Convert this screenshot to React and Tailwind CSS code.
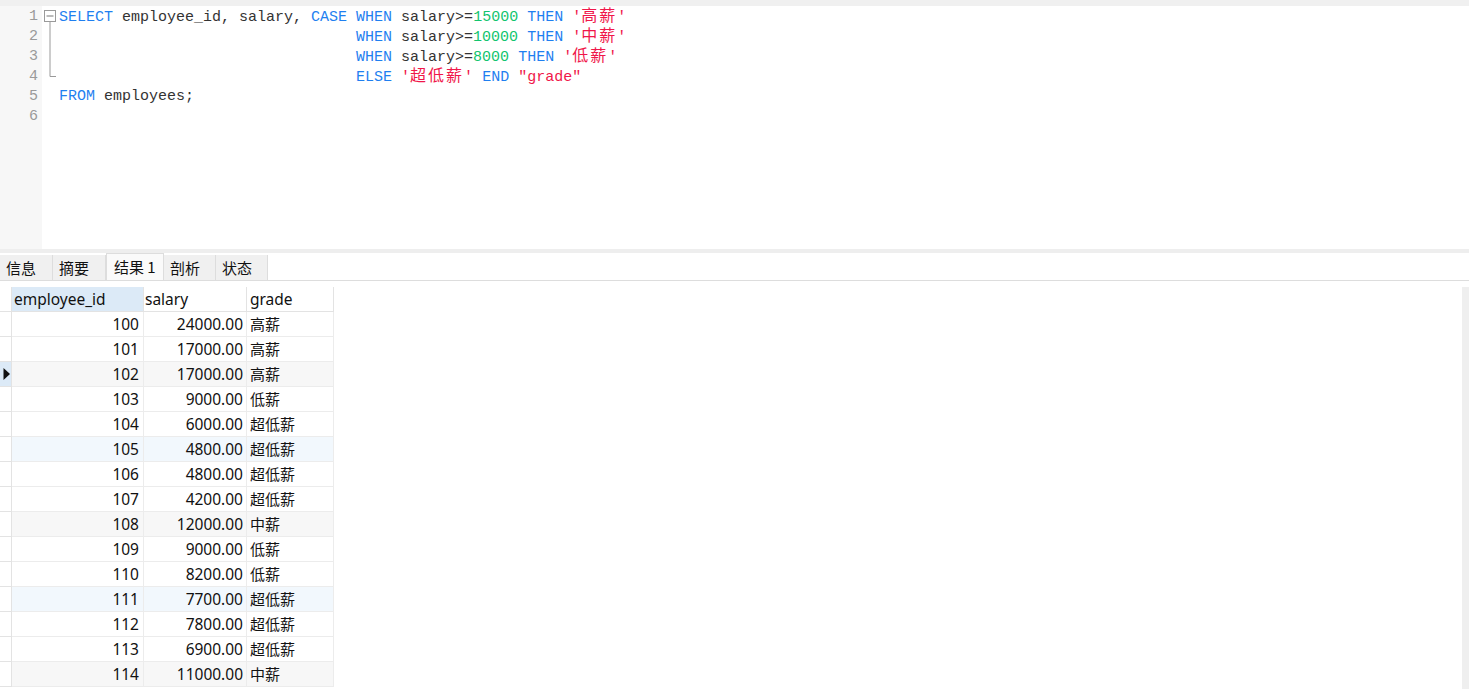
import React from "react";

const B = "text-[#1f7ff0]";
const G = "text-[#12c46e]";
const R = "text-[#f0174a]";
const T = "text-[#333333]";

function Cjk({ children, cls }) {
  return <span className={`text-[16px] tracking-[2px] ${cls}`}>{children}</span>;
}

const lines = [
  [
    ["SELECT", B], [" employee_id, salary, ", T], ["CASE", B], [" ", T], ["WHEN", B], [" salary>=", T], ["15000", G], [" ", T], ["THEN", B], [" '", R], ["高薪", R, true], ["'", R],
  ],
  [
    ["                                 ", T], ["WHEN", B], [" salary>=", T], ["10000", G], [" ", T], ["THEN", B], [" '", R], ["中薪", R, true], ["'", R],
  ],
  [
    ["                                 ", T], ["WHEN", B], [" salary>=", T], ["8000", G], [" ", T], ["THEN", B], [" '", R], ["低薪", R, true], ["'", R],
  ],
  [
    ["                                 ", T], ["ELSE", B], [" '", R], ["超低薪", R, true], ["'", R], [" ", T], ["END", B], [" ", T], ['"grade"', R],
  ],
  [["FROM", B], [" employees;", T]],
  [],
];

const rows = [
  ["100", "24000.00", "高薪"],
  ["101", "17000.00", "高薪"],
  ["102", "17000.00", "高薪"],
  ["103", "9000.00", "低薪"],
  ["104", "6000.00", "超低薪"],
  ["105", "4800.00", "超低薪"],
  ["106", "4800.00", "超低薪"],
  ["107", "4200.00", "超低薪"],
  ["108", "12000.00", "中薪"],
  ["109", "9000.00", "低薪"],
  ["110", "8200.00", "低薪"],
  ["111", "7700.00", "超低薪"],
  ["112", "7800.00", "超低薪"],
  ["113", "6900.00", "超低薪"],
  ["114", "11000.00", "中薪"],
];

function rowBg(i) {
  if (i % 3 !== 2) return "bg-white";
  return (i / 3) % 2 < 1 ? "bg-[#f7f7f7]" : "bg-[#f2f8fd]";
}

const tabs = ["信息", "摘要", "结果 1", "剖析", "状态"];
const tabW = ["w-[53px]", "w-[53px]", "w-[58px]", "w-[52px]", "w-[52px]"];

export default function App() {
  return (
    <div className="w-[1469px] h-[689px] overflow-hidden bg-white flex flex-col">
      <div className="h-[6px] shrink-0 bg-[#f0f0f0]" />
      {/* Editor */}
      <div className="h-[243px] shrink-0 flex font-['Liberation_Mono','Noto_Sans_CJK_SC',monospace] text-[15px]">
        <div className="w-[42px] bg-[#f7f7f7] pt-[1px] pr-[4px] flex flex-col items-end text-[#9a9a9a]">
          {[1, 2, 3, 4, 5, 6].map((n) => (
            <div key={n} className="h-[20px] leading-[20px]">{n}</div>
          ))}
        </div>
        <div className="w-[17px] shrink-0">
          <svg width="17" height="90" viewBox="0 0 17 90">
            <rect x="2.5" y="4.5" width="11" height="11" fill="white" stroke="#9a9a9a" />
            <line x1="4.5" y1="10" x2="11.5" y2="10" stroke="#777" />
            <line x1="8" y1="15.5" x2="8" y2="70.5" stroke="#9a9a9a" />
            <line x1="8" y1="70.5" x2="14" y2="70.5" stroke="#9a9a9a" />
          </svg>
        </div>
        <div className="pt-[1px] whitespace-pre">
          {lines.map((ln, i) => (
            <div key={i} className="h-[20px] leading-[20px]">
              {ln.map(([t, c, cjk], j) =>
                cjk ? (
                  <Cjk key={j} cls={c}>{t}</Cjk>
                ) : (
                  <span key={j} className={c}>{t}</span>
                )
              )}
            </div>
          ))}
        </div>
      </div>
      <div className="h-[4px] shrink-0 bg-[#eeeeee]" />
      {/* Tabs */}
      <div className="h-[28px] shrink-0 flex items-end border-b border-[#dddddd] font-['Noto_Sans_CJK_SC',sans-serif] text-[15px] text-[#111]">
        {tabs.map((t, i) =>
          i === 2 ? (
            <div key={t} className={`${tabW[i]} h-[27px] bg-[#fafafa] border border-b-0 border-[#dddddd] pl-[7px] leading-[25px]`}>
              {t}
            </div>
          ) : (
            <div key={t} className={`${tabW[i]} h-[25px] bg-[#f0f0f0] border-r border-[#dddddd] pl-[6px] leading-[25px]`}>
              {t}
            </div>
          )
        )}
      </div>
      {/* Grid */}
      <div className="flex-1 flex pt-[6px] font-['Noto_Sans','Noto_Sans_CJK_SC',sans-serif] text-[15.5px] text-[#111]">
        <div className="flex flex-col">
          <div className="flex h-[25px]">
            <div className="w-[12px] border-r border-b border-[#e3e3e3]" />
            <div className="w-[132px] bg-[#dceaf7] border-r border-b border-[#e3e3e3] pl-[2px] leading-[24px]">employee_id</div>
            <div className="w-[103px] border-r border-b border-[#e3e3e3] pl-[1px] leading-[24px]">salary</div>
            <div className="w-[87px] border-r border-b border-[#e3e3e3] pl-[3px] leading-[24px]">grade</div>
          </div>
          {rows.map((r, i) => (
            <div key={r[0]} className={`flex h-[25px] ${rowBg(i)}`}>
              <div className={`w-[12px] border-r border-b border-[#e3e3e3] flex items-center ${i === 2 ? "bg-[#dceaf7]" : "bg-white"}`}>
                {i === 2 && (
                  <svg width="9" height="14" viewBox="0 0 9 14" className="ml-[2px]">
                    <path d="M1.5 1 L8 7 L1.5 13 Z" fill="#111" />
                  </svg>
                )}
              </div>
              <div className="w-[132px] border-r border-b border-[#ececec] pr-[4px] text-right leading-[24px]">{r[0]}</div>
              <div className="w-[103px] border-r border-b border-[#ececec] pr-[3px] text-right leading-[24px]">{r[1]}</div>
              <div className="w-[87px] border-r border-b border-[#ececec] pl-[3px] leading-[24px] font-['Noto_Sans_CJK_SC',sans-serif] text-[15px]">{r[2]}</div>
            </div>
          ))}
        </div>
        <div className="flex-1" />
        <div className="w-[7px] bg-[#efefef]" />
      </div>
    </div>
  );
}
